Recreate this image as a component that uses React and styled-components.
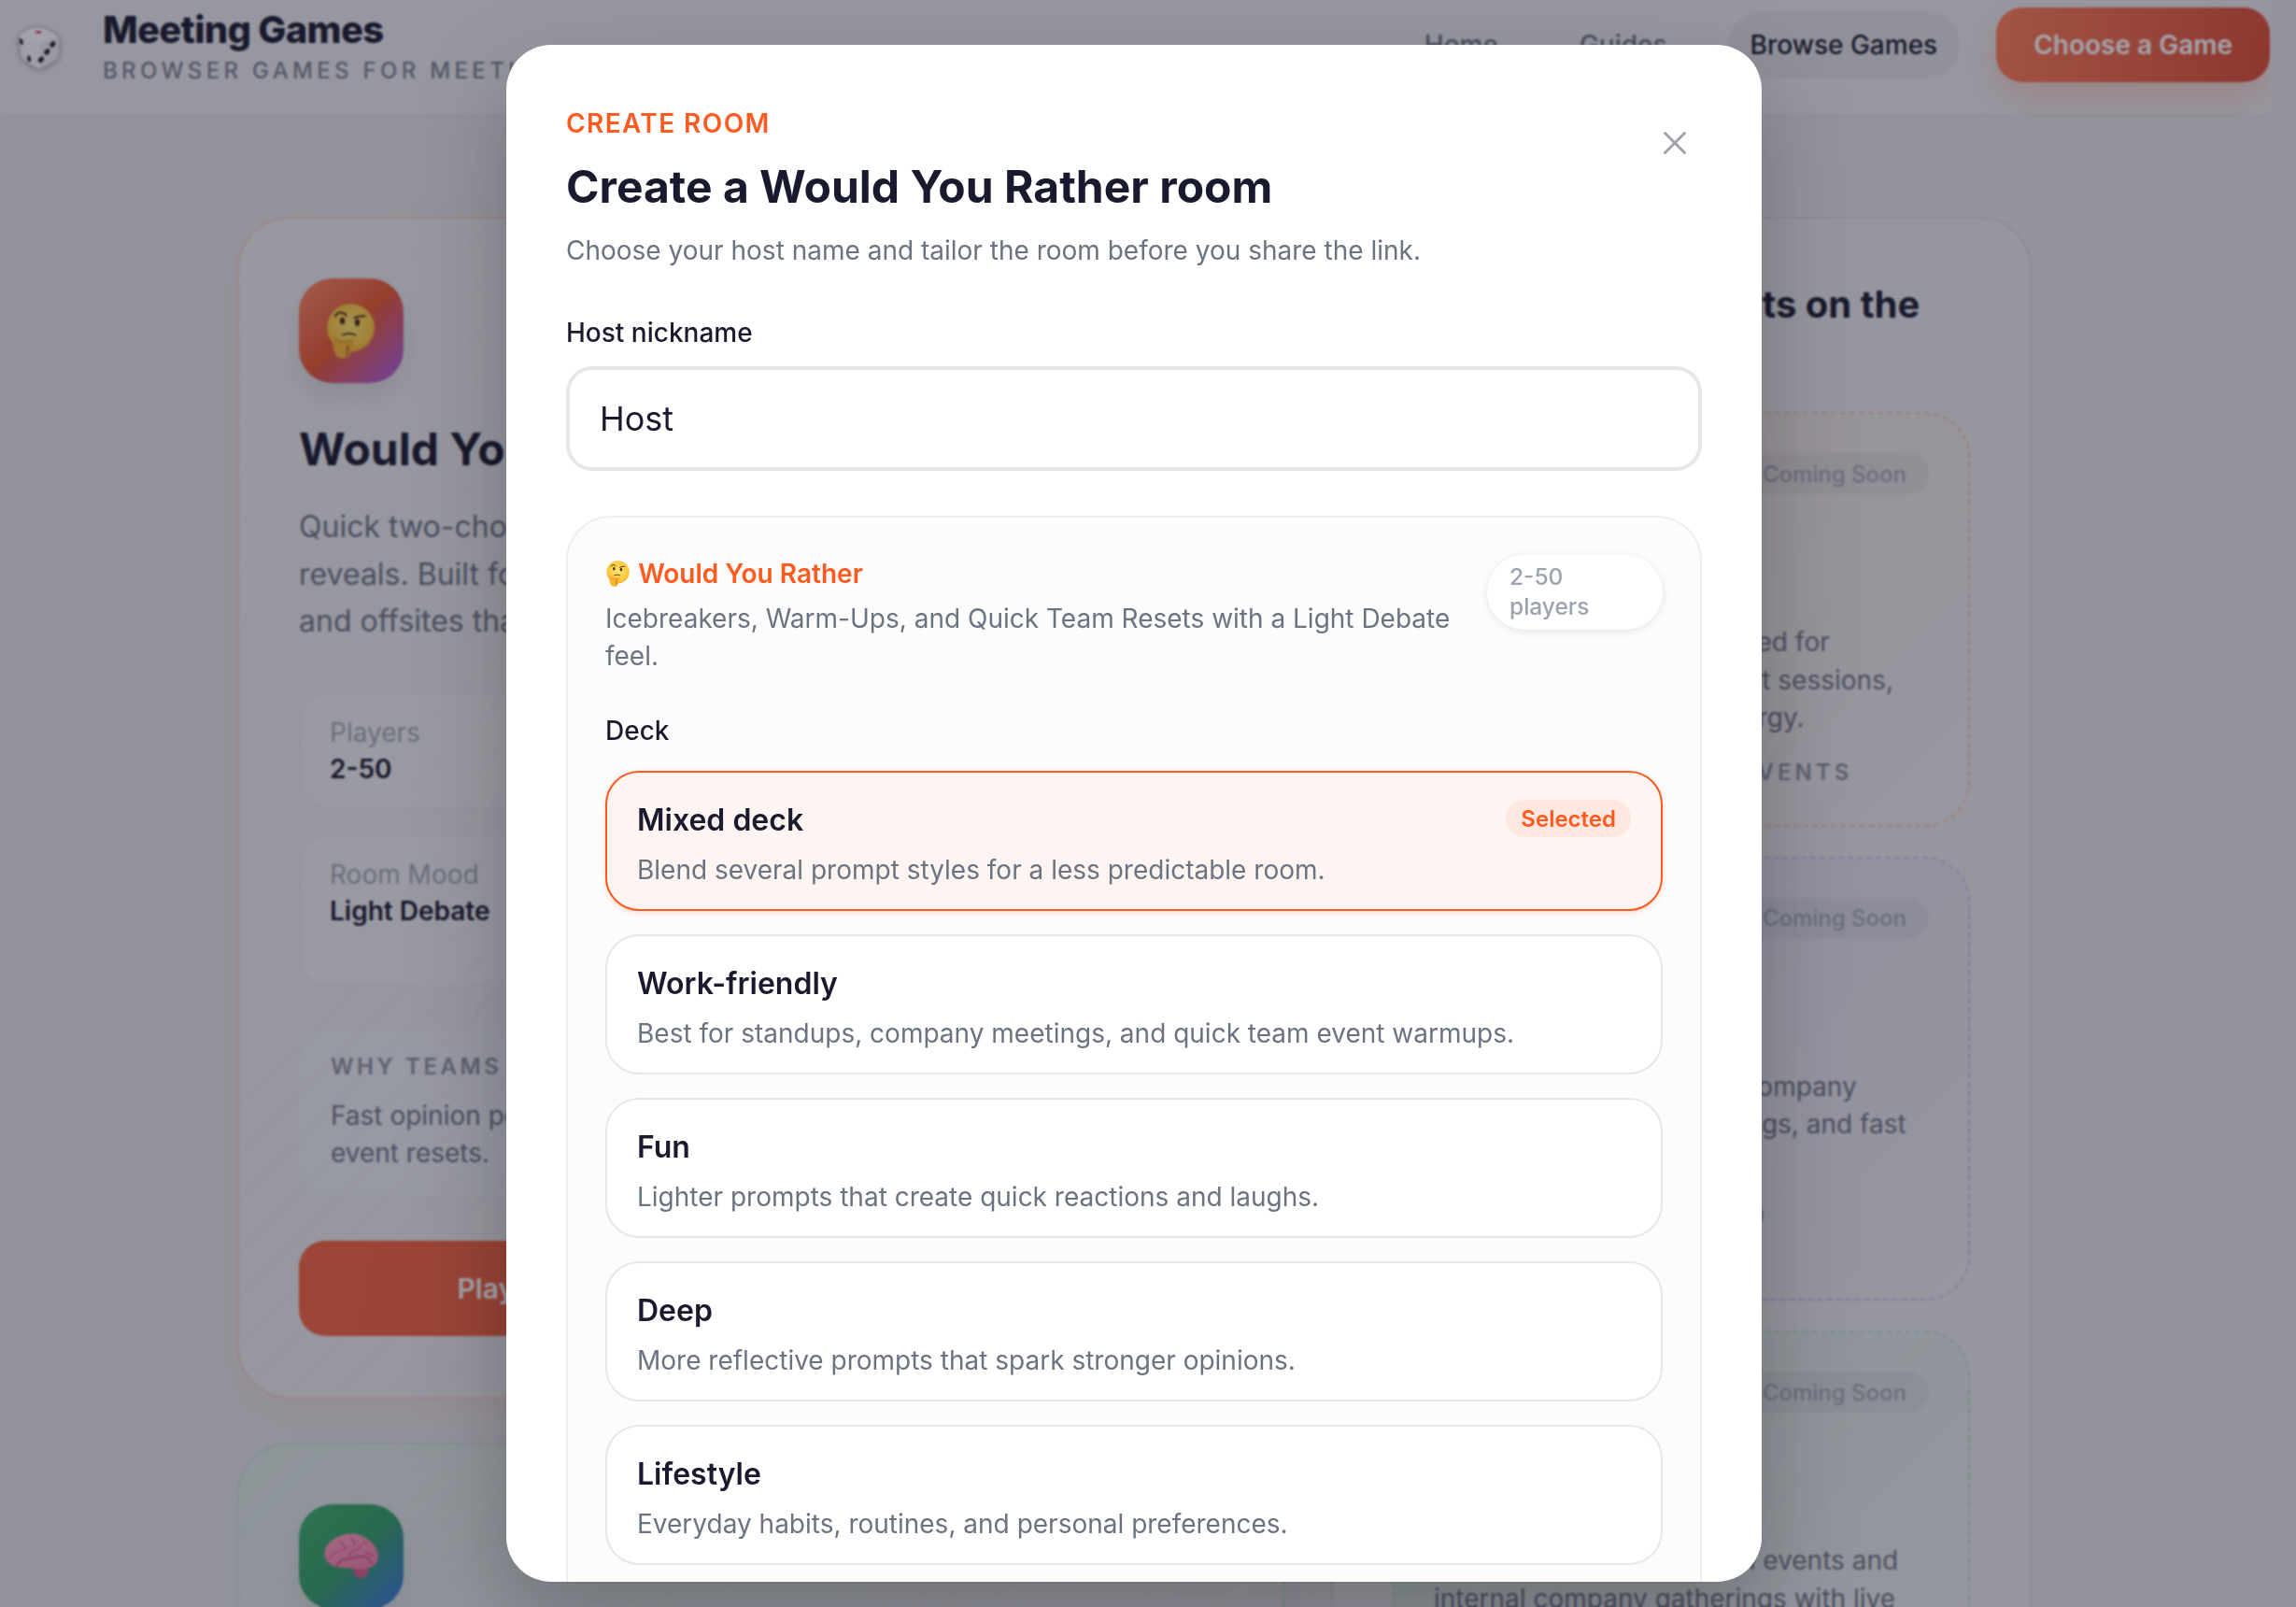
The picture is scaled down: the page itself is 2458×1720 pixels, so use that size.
import React from "react";
import styled, { createGlobalStyle } from "styled-components";
import { X } from "lucide-react";

const Global = createGlobalStyle`
  html, body { margin: 0; padding: 0; height: 1720px; overflow: hidden; }
  body { font-family: Inter, "Liberation Sans", sans-serif; color: #1a1a2e; background: #e6e6e8; }
  * { box-sizing: border-box; }
`;

const Page = styled.div`
  width: 2430px;
  height: 1720px;
  overflow: hidden;
`;
const Header = styled.header`
  height: 122px;
  display: flex;
  align-items: flex-start;
  padding: 8px 0 0 19px;
  background: rgba(255, 255, 255, 0.26);
  box-shadow: 0 2px 8px rgba(26, 26, 46, 0.03);
`;
const Brand = styled.div`
  display: flex;
  align-items: center;
  gap: 45px;
  flex: 1;
`;
const BrandText = styled.div`
  display: flex;
  flex-direction: column;
  margin-top: -1px;
`;
const BrandName = styled.div`
  font-size: 40px;
  line-height: 50px;
  font-weight: 800;
  letter-spacing: -0.018em;
  color: #1a1a2e;
`;
const BrandSub = styled.div`
  margin-top: 2px;
  font-size: 24px;
  line-height: 34px;
  font-weight: 500;
  letter-spacing: 0.18em;
  color: #7d8290;
  white-space: nowrap;
`;
const Nav = styled.nav`
  display: flex;
  align-items: center;
  height: 80px;
`;
const NavLink = styled.a`
  font-size: 28px;
  font-weight: 500;
  color: #6b7280;
  margin-right: ${(p) => p.$gap}px;
`;
const NavPill = styled.a`
  display: flex;
  align-items: center;
  height: 72px;
  padding: 0 24px;
  border-radius: 36px;
  background: rgba(26, 26, 46, 0.05);
  font-size: 28px;
  font-weight: 500;
  color: #1a1a2e;
  margin-right: 39px;
`;
const NavCta = styled.a`
  display: flex;
  align-items: center;
  height: 80px;
  padding: 0 40px;
  border-radius: 28px;
  background: linear-gradient(100deg, #ff7d53, #d94b32);
  box-shadow: 0 16px 36px rgba(255, 90, 31, 0.22);
  font-size: 28px;
  font-weight: 600;
  color: #fff;
`;
const Main = styled.main`
  margin: 110px 0 0 254px;
  display: grid;
  grid-template-columns: 1121px 750px;
  gap: 50px;
  align-items: start;
`;
const LeftColumn = styled.div`
  display: flex;
  flex-direction: column;
  gap: 47px;
`;
const GameCard = styled.article`
  padding: 64px 64px 65px;
  border-radius: 56px;
  border: 2px solid ${(p) => p.$border};
  background: ${(p) => p.$bg};
  box-shadow: 0 20px 50px ${(p) => p.$glow};
`;
const GameIcon = styled.div`
  width: 112px;
  height: 112px;
  border-radius: 36px;
  display: flex;
  align-items: center;
  justify-content: center;
  background: ${(p) => p.$bg};
  box-shadow: 0 14px 28px rgba(26, 26, 46, 0.1);
`;
const GameTitle = styled.h2`
  margin: 42px 0 29px;
  font-size: 48px;
  line-height: 58px;
  font-weight: 700;
  color: #1a1a2e;
`;
const GameDesc = styled.p`
  margin: 0;
  font-size: 32px;
  line-height: 50.5px;
  color: #6f7482;
`;
const Stats = styled.div`
  margin-top: 49px;
  display: flex;
  flex-direction: column;
  gap: 26px;
`;
const Stat = styled.div`
  height: ${(p) => p.$h}px;
  padding: 24px 31px;
  border-radius: 32px;
  border: 2px solid rgba(26, 26, 46, 0.04);
  background: rgba(255, 255, 255, 0.22);
`;
const StatLabel = styled.div`
  font-size: 28px;
  line-height: 36px;
  color: #a3a8b3;
`;
const StatValue = styled.div`
  margin-top: 3px;
  font-size: 28px;
  line-height: 36px;
  font-weight: 600;
  color: #1a1a2e;
`;
const WhyBox = styled.div`
  margin-top: 46px;
  height: 176px;
  padding: 24px 34px;
  border-radius: 32px;
  background: rgba(240, 244, 255, 0.3);
`;
const WhyLabel = styled.div`
  font-size: 24px;
  line-height: 30px;
  font-weight: 600;
  letter-spacing: 0.15em;
  color: #8d929f;
  white-space: nowrap;
`;
const WhyText = styled.p`
  margin: 17px 0 0;
  font-size: 28px;
  line-height: 40.5px;
  color: #6f7482;
`;
const ActionRow = styled.div`
  margin-top: 49px;
  display: grid;
  grid-template-columns: 666px 1fr;
  gap: 24px;
`;
const PlayButton = styled.a`
  height: 102px;
  border-radius: 28px;
  display: flex;
  align-items: center;
  justify-content: center;
  background: linear-gradient(100deg, #f3653f, #e95a38);
  font-size: 30px;
  font-weight: 600;
  color: #fff;
`;
const GuideButton = styled(PlayButton)`
  background: #fff;
  color: #1a1a2e;
`;
const SidePanel = styled.aside`
  padding: 66px 64px 64px;
  min-height: 1700px;
  border-radius: 56px 56px 0 0;
  border: 2px solid rgba(26, 26, 46, 0.09);
  background: rgba(255, 255, 255, 0.16);
`;
const PanelTitle = styled.h2`
  margin: 0 0 37px;
  font-size: 40px;
  line-height: 52px;
  font-weight: 700;
  color: #1a1a2e;
`;
const SoonList = styled.div`
  display: flex;
  flex-direction: column;
  gap: 32px;
`;
const SoonCard = styled.article`
  padding: 42px 42px 40px;
  border-radius: 48px;
  border: 2px dashed ${(p) => p.$border};
  background: ${(p) => p.$bg};
`;
const SoonHead = styled.div`
  display: flex;
  justify-content: flex-end;
  height: 140px;
`;
const SoonPill = styled.span`
  height: 44px;
  padding: 0 24px;
  display: flex;
  align-items: center;
  border-radius: 22px;
  background: rgba(26, 26, 46, 0.05);
  font-size: 24px;
  font-weight: 500;
  color: #a3a8b3;
`;
const SoonTitle = styled.h3`
  margin: 0;
  height: 40px;
  font-size: 32px;
  line-height: 40px;
  font-weight: 700;
`;
const SoonText = styled.p`
  margin: 0;
  padding-top: 2px;
  font-size: 28px;
  line-height: 40.5px;
  color: #6f7482;
  white-space: nowrap;
`;
const SoonLabel = styled.div`
  margin-top: 22px;
  font-size: 24px;
  line-height: 32px;
  font-weight: 600;
  letter-spacing: 0.17em;
  color: #8d929f;
  white-space: nowrap;
`;

const Backdrop = styled.div`
  position: fixed;
  inset: 0;
  padding: 48px 30px 0 0;
  display: flex;
  justify-content: center;
  align-items: flex-start;
  background: rgba(26, 26, 46, 0.4);
  backdrop-filter: blur(1px);
`;
const Modal = styled.div`
  position: relative;
  width: 1344px;
  height: 1645px;
  overflow: hidden;
  padding: 64px 64px 0;
  border-radius: 48px;
  background: #fff;
  box-shadow: 0 40px 100px rgba(0, 0, 0, 0.25);
`;
const CloseButton = styled.button`
  position: absolute;
  top: 84px;
  right: 72px;
  width: 42px;
  height: 42px;
  padding: 0;
  border: 0;
  background: none;
  display: flex;
  align-items: center;
  justify-content: center;
  color: #9fa2ae;
`;
const Eyebrow = styled.div`
  font-size: 28px;
  line-height: 40px;
  font-weight: 600;
  letter-spacing: 0.05em;
  color: #ff5a1f;
`;
const ModalTitle = styled.h1`
  margin: 19px 0 0;
  font-size: 48px;
  line-height: 58px;
  font-weight: 700;
  color: #1a1a2e;
`;
const ModalDesc = styled.p`
  margin: 19px 0 0;
  font-size: 28px;
  line-height: 40px;
  color: #6b7280;
`;
const FieldLabel = styled.label`
  display: block;
  font-size: 28px;
  line-height: 40px;
  font-weight: 500;
  color: #1a1a2e;
`;
const HostField = styled.div`
  margin-top: 48px;
`;
const HostInput = styled.input`
  display: block;
  width: 100%;
  height: 112px;
  margin-top: 16px;
  padding: 0 32px;
  border: 4px solid #e5e7eb;
  border-radius: 28px;
  outline: none;
  background: #fff;
  font-family: inherit;
  font-size: 36px;
  color: #1a1a2e;
`;
const Panel = styled.section`
  margin-top: 48px;
  padding: 40px 40px 48px;
  border: 2px solid #eceef2;
  border-radius: 48px;
  background: #fcfcfd;
`;
const PanelHead = styled.div`
  display: flex;
  justify-content: space-between;
  align-items: flex-start;
  gap: 24px;
`;
const PanelGame = styled.div`
  display: flex;
  align-items: center;
  gap: 9px;
  padding-left: 1px;
  font-size: 28px;
  line-height: 40px;
  font-weight: 600;
  color: #ff5a1f;
`;
const PanelDesc = styled.p`
  margin: 8px 0 0;
  font-size: 28px;
  line-height: 40px;
  color: #6b7280;
`;
const PlayersPill = styled.div`
  flex: none;
  width: 188px;
  height: 80px;
  padding: 7px 24px;
  border-radius: 40px;
  background: #fff;
  box-shadow: 0 2px 8px rgba(26, 26, 46, 0.1);
  font-size: 24.5px;
  line-height: 32px;
  font-weight: 500;
  color: #9ca3af;
`;
const DeckLabel = styled(FieldLabel)`
  margin-top: 40px;
`;
const OptionList = styled.div`
  margin-top: 23px;
  display: flex;
  flex-direction: column;
  gap: 25px;
`;
const Option = styled.div`
  height: 150px;
  padding: 30px 32px 0;
  border-radius: 36px;
  border: 2px solid ${(p) => (p.$selected ? "#ff5a1f" : "#e5e7eb")};
  background: ${(p) => (p.$selected ? "#fef5f2" : "#fff")};
  box-shadow: ${(p) => (p.$selected ? "0 2px 6px rgba(255, 90, 31, 0.2)" : "none")};
`;
const OptionTop = styled.div`
  display: flex;
  justify-content: space-between;
  align-items: center;
  height: 42px;
`;
const OptionName = styled.div`
  font-size: 32px;
  line-height: 42px;
  font-weight: 600;
  color: #1a1a2e;
`;
const SelectedBadge = styled.span`
  height: 40px;
  margin-top: -4px;
  padding: 0 16px;
  display: flex;
  align-items: center;
  border-radius: 20px;
  background: #fde8e1;
  font-size: 24px;
  font-weight: 600;
  color: #ff5a1f;
`;
const OptionDesc = styled.div`
  margin-top: 12px;
  font-size: 28px;
  line-height: 40px;
  color: #6b7280;
`;
const DiceMark = styled.svg`
  flex: none;
  filter: drop-shadow(0 2px 3px rgba(26, 26, 46, 0.35));
`;

const ThinkingFace = ({ height, id }) => (
  <svg height={height} viewBox="30 30 160 178" aria-hidden="true">
    <defs>
      <radialGradient id={id} cx="0.5" cy="0.45" r="0.62">
        <stop offset="0" stopColor="#ffe46b" />
        <stop offset="0.72" stopColor="#fdc73c" />
        <stop offset="1" stopColor="#f29f23" />
      </radialGradient>
    </defs>
    <circle cx="110" cy="108" r="77" fill={`url(#${id})`} />
    <path d="M60 70c5-12 25-17 35-2" fill="none" stroke="#4b2a14" strokeWidth="6" strokeLinecap="round" />
    <path d="M122 76c10-5 22-7 33-6" fill="none" stroke="#4b2a14" strokeWidth="6" strokeLinecap="round" />
    <ellipse cx="83" cy="86" rx="8" ry="11.5" fill="#4b2a14" />
    <ellipse cx="131" cy="91" rx="8" ry="11.5" fill="#4b2a14" />
    <path d="M84 131c14-7 28-6 41 0" fill="none" stroke="#4b2a14" strokeWidth="5.5" strokeLinecap="round" />
    <path d="M53 131c6-3 11 3 12 10 2 7 8 10 16 11 11 1 24-3 36-2 6 1 6 9 1 11-2 16-8 33-18 42-12 7-31 5-39-7-8-14-12-42-8-65z" fill="#f9b62f" />
    <path d="M65 141c2 7 8 10 16 11 11 1 24-3 36-2" fill="none" stroke="#b96a18" strokeWidth="3" />
    <path d="M101 166l-3 30" stroke="#9e3f1a" strokeWidth="4" strokeLinecap="round" />
  </svg>
);

const Brain = () => (
  <svg width="59" height="49" viewBox="0 0 178 150" aria-hidden="true">
    <defs>
      <linearGradient id="brainFill" x1="0.2" y1="0" x2="0.7" y2="1">
        <stop offset="0" stopColor="#ff9fbd" />
        <stop offset="1" stopColor="#f57fa7" />
      </linearGradient>
    </defs>
    <path d="M97 112c-4 12-3 23 6 30 12 8 33 6 39-8 3-7 2-14-1-20z" fill="#d65f88" />
    <path d="M0 64C2 40 22 22 44 12 66 2 92-2 114 6c26 8 48 26 58 50 6 16 5 34-6 46-14 14-36 18-56 16-24-4-44-4-68-6C18 108-2 88 0 64z" fill="url(#brainFill)" />
    <path d="M40 112c2-14 12-24 28-26 20-2 30-8 48-10 16-2 32 6 38 22" fill="none" stroke="#c24c77" strokeWidth="4.5" strokeLinecap="round" />
    <path d="M14 82c12-8 16-20 30-22 12-2 16-10 30-12M82 78c-2-12 6-20 18-22 12-2 20-10 22-22M132 62c10 2 20 6 28 14M48 30c10 2 16 8 20 16M88 16c6 6 10 12 10 22M128 26c4 4 10 8 12 14" fill="none" stroke="#cd5a85" strokeWidth="4" strokeLinecap="round" />
  </svg>
);

const Dice = () => (
  <DiceMark width="46" height="46" viewBox="26 26 144 144" aria-hidden="true">
    <path d="M42 46C58 34 78 28 96 28c20 2 42 12 58 24 8 6 11 14 11 24l-2 42c-1 12-6 20-16 25l-32 18c-9 5-20 5-29 0l-38-24c-9-6-13-14-14-24l-4-42c0-11 4-19 12-25z" fill="#ffffff" stroke="#b4b4ba" strokeWidth="3" />
    <path d="M102 80c30-4 56-24 62-18 1 4 1 9 1 14l-2 42c-1 12-6 20-16 25l-32 18c-5 3-9 4-13 4z" fill="#ededee" />
    <path d="M34 58c12 10 38 22 68 22l0 89c-4 0-9-1-14-4l-38-24c-9-6-13-14-14-24l-4-42c0-6 0-12 2-17z" fill="#f8f8f8" />
    <ellipse cx="95" cy="46" rx="11" ry="4.5" fill="#e0404e" />
    <ellipse cx="38" cy="78" rx="5.5" ry="11" fill="#22222e" transform="rotate(-12 38 78)" />
    <ellipse cx="64" cy="135" rx="5.5" ry="11" fill="#22222e" transform="rotate(-12 64 135)" />
    <ellipse cx="143" cy="87" rx="8" ry="11" fill="#22222e" transform="rotate(35 143 87)" />
    <ellipse cx="124" cy="112" rx="8" ry="11" fill="#22222e" transform="rotate(35 124 112)" />
    <ellipse cx="104" cy="138" rx="8" ry="11" fill="#22222e" transform="rotate(35 104 138)" />
  </DiceMark>
);

const decks = [
  ["Mixed deck", "Blend several prompt styles for a less predictable room.", true],
  ["Work-friendly", "Best for standups, company meetings, and quick team event warmups."],
  ["Fun", "Lighter prompts that create quick reactions and laughs."],
  ["Deep", "More reflective prompts that spark stronger opinions."],
  ["Lifestyle", "Everyday habits, routines, and personal preferences."],
  ["Pop culture", "Movies, music, and trends for a playful room."],
];

const soon = [
  {
    border: "rgba(255, 120, 60, 0.35)",
    bg: "linear-gradient(135deg, rgba(255,170,120,0.14), rgba(255,255,255,0.1))",
    title: "Trivia Sprint",
    lines: ["Quick trivia rounds designed for", "remote team-building short sessions,", "with bursts of friendly energy."],
    label: ["SUITED FOR REMOTE EVENTS"],
  },
  {
    border: "rgba(120, 110, 240, 0.3)",
    bg: "linear-gradient(135deg, rgba(140,130,255,0.12), rgba(255,255,255,0.08))",
    title: "Story Chain",
    lines: ["Lightweight sessions for company", "all-hands, quarterly briefings, and fast", "team resets."],
    label: ["FOR TOWN HALLS, AND", "KICKOFFS"],
  },
  {
    border: "rgba(90, 190, 130, 0.3)",
    bg: "linear-gradient(135deg, rgba(100,210,150,0.16), rgba(255,255,255,0.08))",
    title: "Team Bingo",
    lines: ["Designed for remote team events and", "internal company gatherings with live"],
    label: ["TEAM EVENTS"],
  },
];

export default function App() {
  return (
    <>
      <Global />
      <Page>
        <Header>
          <Brand>
            <Dice />
            <BrandText>
              <BrandName>Meeting Games</BrandName>
              <BrandSub>BROWSER GAMES FOR MEETINGS</BrandSub>
            </BrandText>
          </Brand>
          <Nav>
            <NavLink $gap={87}>Home</NavLink>
            <NavLink $gap={65}>Guides</NavLink>
            <NavPill>Browse Games</NavPill>
            <NavCta>Choose a Game</NavCta>
          </Nav>
        </Header>
        <Main>
          <LeftColumn>
            <GameCard
              $border="rgba(255, 130, 80, 0.28)"
              $bg="linear-gradient(135deg, rgba(255,255,255,0.3), rgba(255,255,255,0.12))"
              $glow="rgba(255, 110, 60, 0.09)"
            >
              <GameIcon $bg="linear-gradient(135deg, #ff8a65 0%, #e8572e 50%, #a85cf0 100%)">
                <ThinkingFace height={59} id="faceLarge" />
              </GameIcon>
              <GameTitle>Would You Rather</GameTitle>
              <GameDesc>
                Quick two-choice prompts with instant
                <br />
                reveals. Built for team meetings, socials,
                <br />
                and offsites that need a light start.
              </GameDesc>
              <Stats>
                <Stat $h={126}>
                  <StatLabel>Players</StatLabel>
                  <StatValue>2-50</StatValue>
                </Stat>
                <Stat $h={165}>
                  <StatLabel>Room Mood</StatLabel>
                  <StatValue>Light Debate</StatValue>
                </Stat>
              </Stats>
              <WhyBox>
                <WhyLabel>WHY TEAMS LIKE IT</WhyLabel>
                <WhyText>
                  Fast opinion polls that suit icebreakers and
                  <br />
                  event resets.
                </WhyText>
              </WhyBox>
              <ActionRow>
                <PlayButton>Play Would You Rather</PlayButton>
                <GuideButton>Read Guide</GuideButton>
              </ActionRow>
            </GameCard>
            <GameCard
              $border="rgba(90, 190, 130, 0.2)"
              $bg="linear-gradient(135deg, rgba(200,240,215,0.28), rgba(255,255,255,0.1))"
              $glow="rgba(60, 160, 110, 0.05)"
            >
              <GameIcon $bg="linear-gradient(135deg, #3fae6c 0%, #33a064 50%, #3a74e0 100%)">
                <Brain />
              </GameIcon>
            </GameCard>
          </LeftColumn>
          <SidePanel>
            <PanelTitle>More meeting formats on the way</PanelTitle>
            <SoonList>
              {soon.map((s) => (
                <SoonCard key={s.title} $border={s.border} $bg={s.bg}>
                  <SoonHead>
                    <SoonPill>Coming Soon</SoonPill>
                  </SoonHead>
                  <SoonTitle>{s.title}</SoonTitle>
                  <SoonText>
                    {s.lines.map((l) => (
                      <React.Fragment key={l}>
                        {l}
                        <br />
                      </React.Fragment>
                    ))}
                  </SoonText>
                  <SoonLabel>
                    {s.label.map((l) => (
                      <React.Fragment key={l}>
                        {l}
                        <br />
                      </React.Fragment>
                    ))}
                  </SoonLabel>
                </SoonCard>
              ))}
            </SoonList>
          </SidePanel>
        </Main>
      </Page>
      <Backdrop>
        <Modal>
          <CloseButton aria-label="Close">
            <X size={42} strokeWidth={1.7} />
          </CloseButton>
          <Eyebrow>CREATE ROOM</Eyebrow>
          <ModalTitle>Create a Would You Rather room</ModalTitle>
          <ModalDesc>Choose your host name and tailor the room before you share the link.</ModalDesc>
          <HostField>
            <FieldLabel>Host nickname</FieldLabel>
            <HostInput defaultValue="Host" />
          </HostField>
          <Panel>
            <PanelHead>
              <div>
                <PanelGame>
                  <ThinkingFace height={28} id="faceSmall" />
                  Would You Rather
                </PanelGame>
                <PanelDesc>Icebreakers, Warm-Ups, and Quick Team Resets with a Light Debate feel.</PanelDesc>
              </div>
              <PlayersPill>
                2-50
                <br />
                players
              </PlayersPill>
            </PanelHead>
            <DeckLabel>Deck</DeckLabel>
            <OptionList>
              {decks.map(([name, desc, selected]) => (
                <Option key={name} $selected={selected}>
                  <OptionTop>
                    <OptionName>{name}</OptionName>
                    {selected && <SelectedBadge>Selected</SelectedBadge>}
                  </OptionTop>
                  <OptionDesc>{desc}</OptionDesc>
                </Option>
              ))}
            </OptionList>
          </Panel>
        </Modal>
      </Backdrop>
    </>
  );
}
